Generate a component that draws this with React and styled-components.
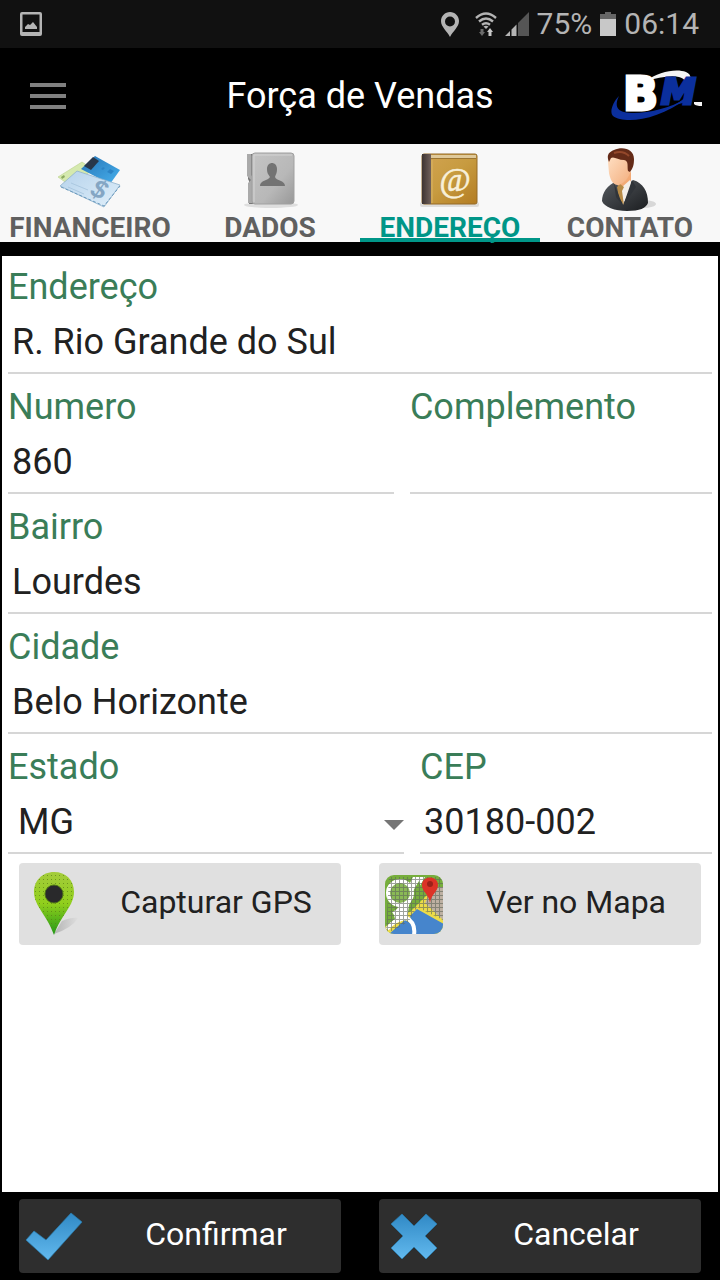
import React, { useState } from 'react'
import styled, { createGlobalStyle } from 'styled-components'

const GlobalStyle = createGlobalStyle`
  * {
    box-sizing: border-box;
  }

  body {
    margin: 0;
    background-color: #000;
    font-family: Roboto, 'Liberation Sans', sans-serif;
  }

  button, input, select {
    font-family: inherit;
  }
`

const Page = styled.div`
  display: flex;
  flex-direction: column;
  min-height: 100vh;
  background-color: #000;
`

const StatusBar = styled.div`
  display: flex;
  align-items: center;
  justify-content: space-between;
  height: 48px;
  padding: 0 21px 0 20px;
  background-color: #111;
  color: #b4b4b4;
  font-size: 30px;
  line-height: 48px;
`

const StatusGroup = styled.div`
  display: flex;
  align-items: center;
  gap: 8px;

  svg {
    display: block;
  }
`

const Header = styled.header`
  display: grid;
  grid-template-columns: 1fr auto 1fr;
  align-items: center;
  height: 96px;
  padding: 0 16px 0 28px;
`

const MenuButton = styled.button`
  justify-self: start;
  padding: 0;
  border: none;
  background: none;
  cursor: pointer;

  svg {
    display: block;
  }
`

const Title = styled.h1`
  margin: 0 0 0 -12px;
  color: #fff;
  font-size: 36px;
  font-weight: 400;
  line-height: 42px;
`

const LogoBox = styled.div`
  justify-self: end;

  svg {
    display: block;
  }
`

const Tabs = styled.div`
  display: grid;
  grid-template-columns: repeat(4, 1fr);
  height: 98px;
  margin-bottom: 14px;
  background-color: #f8f8f8;
`

const Tab = styled.button`
  position: relative;
  display: flex;
  flex-direction: column;
  align-items: center;
  gap: 2px;
  padding: 4px 0 0;
  border: none;
  background: none;
  color: ${({ $active }) => ($active ? '#009688' : '#606060')};
  cursor: pointer;

  &::after {
    content: '';
    position: absolute;
    right: 0;
    bottom: 0;
    left: 0;
    height: 4px;
    background-color: ${({ $active }) => ($active ? '#009688' : 'transparent')};
  }

  svg {
    flex: none;
    display: block;
  }
`

const TabLabel = styled.span`
  font-size: 28px;
  font-weight: 700;
  line-height: 28px;
`

const Panel = styled.form`
  display: flex;
  flex: 1;
  flex-direction: column;
  padding: 0 6px;
  border: solid #000;
  border-width: 0 2px;
  background-color: #fff;
`

const Row = styled.div`
  display: grid;
  grid-template-columns: ${({ $columns }) => $columns || '1fr'};
  column-gap: 16px;
`

const Field = styled.div`
  position: relative;
  display: flex;
  flex-direction: column;
  min-width: 0;
  height: 120px;
  padding-top: 12px;
  border-bottom: 2px solid #d6d6d6;

  ${Row}:first-child & {
    height: 118px;
    padding-top: 10px;
  }
`

const Label = styled.label`
  color: #3a7d58;
  font-size: 36px;
  line-height: 42px;
`

const Input = styled.input`
  width: 100%;
  height: 56px;
  margin-top: 6px;
  padding: 0 4px;
  border: none;
  outline: none;
  background: none;
  color: #212121;
  font-size: 36px;
`

const Select = styled.select`
  width: 100%;
  height: 56px;
  margin-top: 6px;
  padding: 0 32px 0 10px;
  border: none;
  outline: none;
  appearance: none;
  background: none;
  color: #212121;
  font-size: 36px;
`

const Caret = styled.svg`
  position: absolute;
  right: 0;
  bottom: 22px;
  pointer-events: none;
`

const Actions = styled.div`
  display: grid;
  grid-template-columns: 1fr 1fr;
  gap: 38px;
  padding: ${({ $footer }) => ($footer ? '7px 19px' : '9px 11px')};
`

const ActionButton = styled.button`
  display: flex;
  align-items: center;
  height: ${({ $dark }) => ($dark ? '74px' : '82px')};
  padding: 0;
  border: none;
  border-radius: 4px;
  background-color: ${({ $dark }) => ($dark ? '#2e2e2e' : '#e0e0e0')};
  color: ${({ $dark }) => ($dark ? '#fff' : '#212121')};
  font-size: 32px;
  cursor: pointer;

  svg {
    flex: none;
  }
`

const ActionLabel = styled.span`
  flex: 1;
  padding-bottom: 4px;
  line-height: 38px;
  text-align: center;
`

const PictureIcon = () => (
  <svg width="22" height="24" viewBox="0 0 22 24">
    <path fillRule="evenodd" fill="#b4b4b4" d="M2 0h18q2 0 2 2v20q0 2-2 2H2q-2 0-2-2V2Q0 0 2 0zM2.500 2.500v17.500h17V2.500z" />
    <path fill="#b4b4b4" d="M5 17v-2l3-3 2 1 3-3 4 5v2z" />
  </svg>
)

const PlaceIcon = () => (
  <svg width="18" height="25" viewBox="0 0 18 25">
    <path fillRule="evenodd" fill="#b4b4b4" d="M9 0C4 0 0 4 0 9c0 6 6 10 9 16 3-6 9-10 9-16 0-5-4-9-9-9zm0 4.500a5 5 0 1 1 0 10 5 5 0 0 1 0-10z" />
  </svg>
)

const WifiIcon = () => (
  <svg width="22" height="24" viewBox="0 0 22 24">
    <g fill="none" stroke="#b4b4b4" strokeWidth="2.400">
      <path d="M1 6q10-9 20 0" />
      <path d="M4 9.500q7-6 14 0" />
      <path d="M7 12.800q4-3.200 8 0" />
    </g>
    <path fill="#b4b4b4" d="M8.500 14.500q2.500-1.500 5 0L11 17z" />
    <path fill="#6b6b6b" d="M5.500 17h3v3H10l-3 4-3-4h1.500z" />
    <path fill="#c8c8c8" d="M13.500 24h3v-4H18l-3-4-3 4h1.500z" />
  </svg>
)

const SignalIcon = () => (
  <svg width="24" height="24" viewBox="0 0 24 24">
    <path fill="#b4b4b4" d="M0 24l5-5v5zM6.500 24v-6.500l5-5V24z" />
    <path fill="#555" d="M13 24V11L24 0v24z" />
  </svg>
)

const BatteryIcon = () => (
  <svg width="16" height="24" viewBox="0 0 16 24">
    <path fill="#666" d="M5 0h6v2h5v5H0V2h5z" />
    <path fill="#c8c8c8" d="M0 7h16v17H0z" />
  </svg>
)

const MenuIcon = () => (
  <svg width="40" height="28" viewBox="0 0 40 28">
    <path fill="#808080" d="M2 1h36v4H2zM2 12h36v4H2zM2 23h36v4H2z" />
  </svg>
)

const Logo = () => (
  <svg width="94" height="54" viewBox="0 0 94 54" role="img" aria-label="BM">
    <path fill="#f4f4f4" d="M36 12C48 3 66-1 76 3c9 4 3 13-4 17 3-6 5-10-3-12-9-2-22 1-33 4z" />
    <path fill="#0b2f9d" d="M9 27C3 33-1 43 3 47c11 8 45 5 74-18C56 42 27 46 14 43 6 41 5 35 9 27z" />
    <path fill="#0b2f9d" d="M45 43C58 41 70 34 80 24v9q-14 1-32 10z" />
    <text x="51" y="35" fill="#0b2f9d" stroke="#0b2f9d" strokeWidth="3" fontFamily="DejaVu Sans" fontSize="35" fontWeight="700" fontStyle="oblique">M</text>
    <path fill="#f4f4f4" d="M84 33h8v4q-6 0-8-2z" />
    <text x="13" y="41" fill="#fff" stroke="#fff" strokeWidth="3" fontFamily="DejaVu Sans" fontSize="46" fontWeight="700">B</text>
  </svg>
)

const FinanceIcon = () => (
  <svg width="68" height="64" viewBox="0 0 68 64">
    <defs>
      <linearGradient id="card" x1="0" y1="0" x2="1" y2="1">
        <stop offset="0" stopColor="#2474b7" />
        <stop offset="1" stopColor="#48b0ec" />
      </linearGradient>
      <linearGradient id="check" x1="0" y1="0" x2="1" y2="1">
        <stop offset="0" stopColor="#b5d2eb" />
        <stop offset="1" stopColor="#e0effa" />
      </linearGradient>
    </defs>
    <path fill="#d5e9ae" stroke="#bad28c" strokeWidth=".6" d="M2 29l24-15 12 8-26 14z" />
    <path fill="#8ba95f" d="M5 29l3-2 1 2-3 2z" />
    <path fill="url(#card)" d="M25 21l14-13 25 14-10 14z" />
    <path fill="#28374a" d="M28 18l9-9 6 4-8 9z" />
    <path fill="#2b83c5" d="M51 24l3-3 4 2-3 3zM45 21l2-2 2 1-2 2z" />
    <path fill="url(#check)" stroke="#91b3cc" strokeWidth=".8" d="M4 38l17-15 43 14-16 22z" />
    <path stroke="#a5c3dc" strokeWidth=".8" d="M15 35l17 7M12 39l16 7" />
    <path fill="none" stroke="#6798bd" strokeDasharray="3 2" d="M5 39l43 19 16-20" />
    <text x="36" y="50" fill="#84a6c4" fontFamily="Liberation Sans" fontSize="26" fontStyle="italic" fontWeight="700" transform="rotate(24 43 42)">$</text>
  </svg>
)

const DataIcon = () => (
  <svg width="60" height="64" viewBox="0 0 60 64">
    <defs>
      <linearGradient id="cover" x1="0" y1="0" x2="1" y2="1">
        <stop offset="0" stopColor="#c4c4c4" />
        <stop offset=".6" stopColor="#b8b8b8" />
        <stop offset="1" stopColor="#989898" />
      </linearGradient>
    </defs>
    <ellipse cx="31" cy="57" rx="27" ry="3" fill="#dedede" />
    <path fill="#777" d="M8 6h7v50H9V33l-1-2z" />
    <path fill="#aaa" d="M7 6h4v21l3 4-2 3v16l2 5H8V35l3-3-4-4z" />
    <rect x="12" y="5" width="42" height="51" rx="3" fill="url(#cover)" stroke="#a0a0a0" />
    <path stroke="#d4d4d4" d="M14 7h38M14 7v47" />
    <path fill="#737373" d="M27 21c0-8 10-8 10 0 0 4-1 5-2 8 1 4 10 3 10 9H20c0-6 8-5 10-9-2-3-3-4-3-8z" />
  </svg>
)

const AddressIcon = () => (
  <svg width="64" height="64" viewBox="0 0 64 64">
    <defs>
      <linearGradient id="book" x1="0" y1="0" x2="1" y2="1">
        <stop offset="0" stopColor="#d2a452" />
        <stop offset=".5" stopColor="#c79b40" />
        <stop offset="1" stopColor="#b37c22" />
      </linearGradient>
      <linearGradient id="spine">
        <stop offset="0" stopColor="#3e3431" />
        <stop offset="1" stopColor="#70605a" />
      </linearGradient>
    </defs>
    <rect x="2" y="54" width="59" height="5" rx="2" fill="#dedddb" />
    <rect x="4" y="6" width="55" height="50" rx="2" fill="url(#book)" stroke="#946b28" />
    <path fill="#dfc99a" d="M12 7h46v3H12z" />
    <path fill="#9c7531" d="M13 10h45v1H13z" />
    <path fill="url(#spine)" d="M4 6h9v50H4z" />
    <path stroke="#d9b466" d="M14 12v43" />
    <text x="37" y="43" fill="#f8f0d9" stroke="#f8f0d9" strokeWidth=".6" fontFamily="Liberation Serif" fontSize="34" fontStyle="italic" textAnchor="middle">@</text>
  </svg>
)

const ContactIcon = () => (
  <svg width="64" height="64" viewBox="0 0 64 64">
    <defs>
      <linearGradient id="skin" x1="0" y1="0" x2="1" y2="1">
        <stop offset="0" stopColor="#ffe0c4" />
        <stop offset="1" stopColor="#f2ad7c" />
      </linearGradient>
      <linearGradient id="suit" x1="0" y1="0" x2="1" y2="1">
        <stop offset="0" stopColor="#565b60" />
        <stop offset="1" stopColor="#1b1d20" />
      </linearGradient>
    </defs>
    <ellipse cx="45" cy="56" rx="13" ry="4" fill="#d8d8d8" />
    <path fill="url(#suit)" d="M19 33C9 37 4 45 4 53c2 6 13 10 25 10 13 0 19-3 21-8 0-12-5-20-15-23l-8 8z" />
    <path fill="#f2aa76" d="M19 28l14-4v9l-7 7-7-3z" />
    <path fill="#f3eee8" d="M18 34l4 4 3 19 9-20-2-5-8 7z" />
    <path fill="#b88b46" d="M19 39l3-3 4 3-2 4 2 14-5-7z" />
    <path fill="#303439" d="M16 35l9 23-7-9zM34 32l4 7-13 19z" />
    <path fill="url(#skin)" d="M10 14c0-4 4-7 9-7h13l1 14c-1 8-7 15-13 16-6 0-8-7-9-12z" />
    <path fill="#642b18" d="M11 14C8 7 11 4 16 2c9-4 20-1 20 9 0 6-1 9-4 13l-2-1c-1-5 1-10-4-11-6 0-10-4-13-2z" />
    <path fill="none" stroke="#94482b" strokeWidth="2" d="M16 5q9-3 15 3" />
  </svg>
)

const PinIcon = () => (
  <svg width="72" height="82" viewBox="0 0 72 82">
    <defs>
      <linearGradient id="pin" x1="0" y1="0" x2="0" y2="1">
        <stop offset="0" stopColor="#a4cc3b" />
        <stop offset=".5" stopColor="#91cf1c" />
        <stop offset="1" stopColor="#229817" />
      </linearGradient>
      <linearGradient id="shade">
        <stop offset="0" stopColor="#b4b4b4" />
        <stop offset="1" stopColor="#dedede" />
      </linearGradient>
      <pattern id="dots" width="4" height="4" patternUnits="userSpaceOnUse">
        <path fill="#587f16" fillOpacity=".7" d="M0 0h1v1H0z" />
      </pattern>
    </defs>
    <path fill="url(#shade)" d="M35 71l8-13q10-4 16-3-6 10-24 16z" />
    <path fill="url(#pin)" d="M35 9c-12 0-20 9-20 20 0 14 13 23 20 43 7-20 20-29 20-43 0-12-8-20-20-20z" />
    <path fill="url(#dots)" d="M35 9c-12 0-20 9-20 20 0 14 13 23 20 43 7-20 20-29 20-43 0-12-8-20-20-20z" />
    <circle cx="35" cy="31" r="9" fill="#29292b" stroke="#4a6f18" />
  </svg>
)

const MapIcon = () => (
  <svg width="72" height="82" viewBox="0 0 72 82">
    <defs>
      <clipPath id="mapShape">
        <rect x="6" y="12" width="58" height="59" rx="9" />
      </clipPath>
      <pattern id="mesh" width="4" height="4" patternUnits="userSpaceOnUse">
        <path fill="#5e6658" fillOpacity=".6" d="M0 0h4v1H1v3H0z" />
      </pattern>
    </defs>
    <g clipPath="url(#mapShape)">
      <path fill="#76ae3c" d="M6 12h58v59H6z" />
      <path fill="#ecdc48" d="M32 48l18-18 14 26v15H6v-9z" />
      <path fill="#bdb0a2" d="M64 24H54l-8 16 18 17z" />
      <path fill="#fff" d="M34 14h12L30 42l-2 14-16 6-6-2v-6l12-8z" />
      <path fill="#76ae3c" d="M40 18l4 14-12 9 2-13z" />
      <path fill="#76ae3c" d="M6 44q8 2 10 12l-10 8z" />
      <circle cx="21" cy="30" r="12" fill="#8aba55" stroke="#fff" strokeWidth="4" />
      <path fill="#4685cc" d="M10 71l16-14 7 4-2-8 7-7 27 15v10z" />
      <path fill="none" stroke="#fff" strokeWidth="4" d="M26 54q11 5 9 18M8 66q10-12 21-11" />
      <path fill="url(#mesh)" d="M10 14h54v43L38 44l-8 14-16 10H7z" />
      <path fill="#dc3327" d="M51 40c-1-9-8-11-8-18 0-10 16-10 16 0 0 7-7 9-8 18z" />
      <circle cx="51" cy="21" r="3" fill="#9b211a" />
    </g>
  </svg>
)

const CheckIcon = () => (
  <svg width="72" height="74" viewBox="0 0 72 74">
    <defs>
      <linearGradient id="blue" x1="0" y1="0" x2="0" y2="1">
        <stop offset="0" stopColor="#3089c5" />
        <stop offset="1" stopColor="#62b9ee" />
      </linearGradient>
    </defs>
    <path fill="url(#blue)" stroke="#287caf" strokeWidth=".7" d="M7 41l8-9 12 9 25-27 11 9-34 38z" />
  </svg>
)

const CloseIcon = () => (
  <svg width="72" height="74" viewBox="0 0 72 74">
    <path fill="url(#blue)" stroke="#287caf" strokeWidth=".7" d="M12 25l11-10 12 12 12-12 11 10-12 12 12 12-11 11-12-12-12 12-11-11 12-12z" />
  </svg>
)

const tabs = [
  { name: 'FINANCEIRO', Icon: FinanceIcon },
  { name: 'DADOS', Icon: DataIcon },
  { name: 'ENDEREÇO', Icon: AddressIcon },
  { name: 'CONTATO', Icon: ContactIcon },
]

const TextField = ({ id, label, value }) => (
  <Field>
    <Label htmlFor={id}>{label}</Label>
    <Input id={id} type="text" defaultValue={value} />
  </Field>
)

const App = () => {
  const [active, setActive] = useState('ENDEREÇO')

  return (
    <Page>
      <GlobalStyle />
      <StatusBar>
        <StatusGroup>
          <PictureIcon />
        </StatusGroup>
        <StatusGroup>
          <PlaceIcon />
          <span />
          <WifiIcon />
          <SignalIcon />
          <span>75%</span>
          <BatteryIcon />
          <span>06:14</span>
        </StatusGroup>
      </StatusBar>

      <Header>
        <MenuButton type="button" aria-label="Menu">
          <MenuIcon />
        </MenuButton>
        <Title>Força de Vendas</Title>
        <LogoBox>
          <Logo />
        </LogoBox>
      </Header>

      <Tabs role="tablist">
        {tabs.map(({ name, Icon }) => (
          <Tab
            key={name}
            type="button"
            role="tab"
            aria-selected={active === name}
            $active={active === name}
            onClick={() => setActive(name)}
          >
            <Icon />
            <TabLabel>{name}</TabLabel>
          </Tab>
        ))}
      </Tabs>

      <Panel onSubmit={(e) => e.preventDefault()}>
        <Row>
          <TextField id="endereco" label="Endereço" value="R. Rio Grande do Sul" />
        </Row>
        <Row $columns="23fr 18fr">
          <TextField id="numero" label="Numero" value="860" />
          <TextField id="complemento" label="Complemento" value="" />
        </Row>
        <Row>
          <TextField id="bairro" label="Bairro" value="Lourdes" />
        </Row>
        <Row>
          <TextField id="cidade" label="Cidade" value="Belo Horizonte" />
        </Row>
        <Row $columns="19fr 14fr">
          <Field>
            <Label htmlFor="estado">Estado</Label>
            <Select id="estado" defaultValue="MG">
              <option>MG</option>
            </Select>
            <Caret width="20" height="10" viewBox="0 0 20 10">
              <path fill="#757575" d="M0 0h20L10 10z" />
            </Caret>
          </Field>
          <TextField id="cep" label="CEP" value="30180-002" />
        </Row>
        <Actions>
          <ActionButton type="button">
            <PinIcon />
            <ActionLabel>Capturar GPS</ActionLabel>
          </ActionButton>
          <ActionButton type="button">
            <MapIcon />
            <ActionLabel>Ver no Mapa</ActionLabel>
          </ActionButton>
        </Actions>
      </Panel>

      <Actions $footer>
        <ActionButton type="button" $dark>
          <CheckIcon />
          <ActionLabel>Confirmar</ActionLabel>
        </ActionButton>
        <ActionButton type="button" $dark>
          <CloseIcon />
          <ActionLabel>Cancelar</ActionLabel>
        </ActionButton>
      </Actions>
    </Page>
  )
}

export default App
